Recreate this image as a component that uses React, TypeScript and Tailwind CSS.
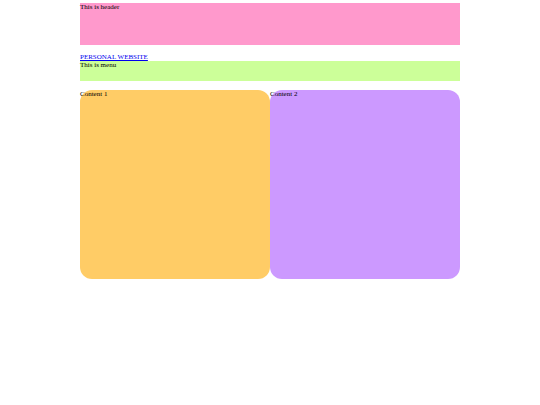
export default function App() {
  return (
    <div className="w-[540px] h-[405px] bg-white font-['Liberation_Serif',serif] text-[7px] leading-[8px] text-black">
      <div className="mx-auto w-[380px] pt-[3px]">
        <div className="h-[42px] bg-[#ff99cc]">This is header</div>
        <a href="#" className="block mt-[8px] text-[#0000ee] underline">PERSONAL WEBSITE</a>
        <div className="h-[20px] bg-[#ccff99]">This is menu</div>
        <div className="mt-[9px] flex">
          <div className="w-[190px] h-[189px] bg-[#ffcc66] rounded-[12px]">Content 1</div>
          <div className="w-[190px] h-[189px] bg-[#cc99ff] rounded-[12px]">Content 2</div>
        </div>
      </div>
    </div>
  );
}
